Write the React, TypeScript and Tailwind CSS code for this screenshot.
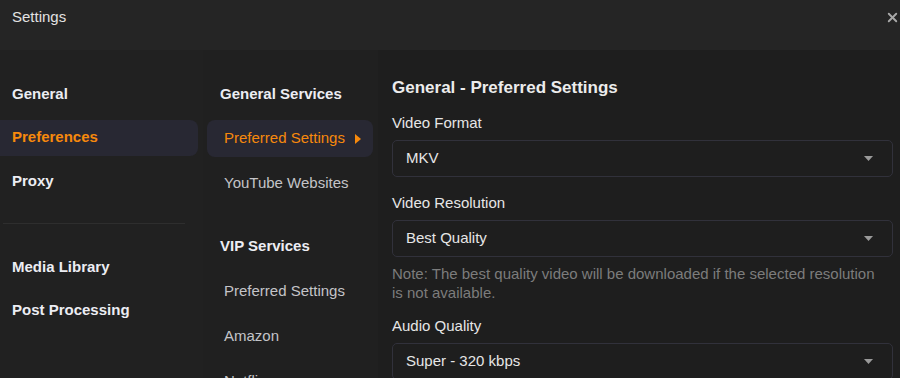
import { X } from "lucide-react";

const mainNav = ["General", "Preferences", "Proxy"];
const extraNav = ["Media Library", "Post Processing"];

const Caret = () => (
  <svg width="9" height="5" viewBox="0 0 9 5" className="text-[#9a9a9a]">
    <path d="M0 0 L9 0 L4.5 5 Z" fill="currentColor" />
  </svg>
);

const Select = ({ value }: { value: string }) => (
  <div className="flex h-[37px] items-center justify-between rounded-[5px] border border-[#31313b] bg-[#1e1e1e] pl-[13px] pr-[19px] text-[15px] text-[#e6e6e6]">
    <span>{value}</span>
    <Caret />
  </div>
);

export default function App() {
  return (
    <div
      className="flex h-[378px] w-[900px] flex-col overflow-hidden bg-[#212121]"
      style={{ fontFamily: "'Liberation Sans', Arial, sans-serif" }}
    >
      <div className="flex h-[50px] shrink-0 items-start justify-between bg-[#252525] pl-[12px] pr-0 pt-[6px]">
        <span className="text-[15px] text-[#e2e2e2]">Settings</span>
        <X size={15} strokeWidth={3} className="mt-[4px] text-[#a8a8a8]" />
      </div>

      <div className="flex flex-1 overflow-hidden">
        <div className="w-[203px] shrink-0 bg-[#212121] pt-[26px]">
          {mainNav.map((item) => (
            <div
              key={item}
              className={
                item === "Preferences"
                  ? "mr-[5px] mb-[7.5px] flex h-[36px] items-center rounded-r-[8px] bg-[#282833] pl-[12px] text-[15px] font-bold text-[#f7890c]"
                  : "mr-[5px] mb-[7.5px] flex h-[36px] items-center pl-[12px] text-[15px] font-bold text-[#ecedf3]"
              }
            >
              {item}
            </div>
          ))}
          <div className="ml-[3px] mr-[18px] mt-[24px] mb-[25px] h-px bg-[#2e2e2e]" />
          {extraNav.map((item) => (
            <div
              key={item}
              className="mb-[7px] flex h-[36px] items-center pl-[12px] text-[15px] font-bold text-[#ecedf3]"
            >
              {item}
            </div>
          ))}
        </div>

        <div className="w-[175px] shrink-0 bg-[#202020] pt-[26px]">
          <div className="flex h-[36px] items-center pl-[17px] text-[15px] font-bold text-[#ecedf3]">
            General Services
          </div>
          <div className="mb-[8px] ml-[4px] mr-[5px] mt-[8px] flex h-[37px] items-center justify-between rounded-[8px] bg-[#282833] pl-[17px] pr-[12px] text-[15px] text-[#f7890c]">
            <span>Preferred Settings</span>
            <svg width="6" height="10" viewBox="0 0 6 10">
              <path d="M0 0 L6 5 L0 10 Z" fill="#f7890c" />
            </svg>
          </div>
          <div className="flex h-[36px] items-center pl-[21px] text-[15px] text-[#c4c4c8]">
            YouTube Websites
          </div>
          <div className="mt-[27px] flex h-[36px] items-center pl-[17px] text-[15px] font-bold text-[#ecedf3]">
            VIP Services
          </div>
          {["Preferred Settings", "Amazon", "Netflix"].map((item) => (
            <div
              key={item}
              className="mt-[9px] flex h-[36px] items-center pl-[21px] text-[15px] text-[#c4c4c8]"
            >
              {item}
            </div>
          ))}
        </div>

        <div className="flex-1 bg-[#1e1e1e] pl-[14px] pr-[7px] pt-[27px]">
          <div className="text-[17px] font-bold leading-[22px] text-[#ececec]">
            General - Preferred Settings
          </div>
          <div className="mt-[15px] text-[15px] leading-[18px] text-[#e6e6e6]">Video Format</div>
          <div className="mt-[8px]">
            <Select value="MKV" />
          </div>
          <div className="mt-[17px] text-[15px] leading-[18px] text-[#e6e6e6]">Video Resolution</div>
          <div className="mt-[8px]">
            <Select value="Best Quality" />
          </div>
          <div className="mt-[7px] pr-[14px] text-[15px] leading-[19px] text-[#7c7c7c]">
            Note: The best quality video will be downloaded if the selected resolution is not available.
          </div>
          <div className="mt-[15px] text-[15px] leading-[18px] text-[#e6e6e6]">Audio Quality</div>
          <div className="mt-[8px]">
            <Select value="Super - 320 kbps" />
          </div>
        </div>
      </div>
    </div>
  );
}
